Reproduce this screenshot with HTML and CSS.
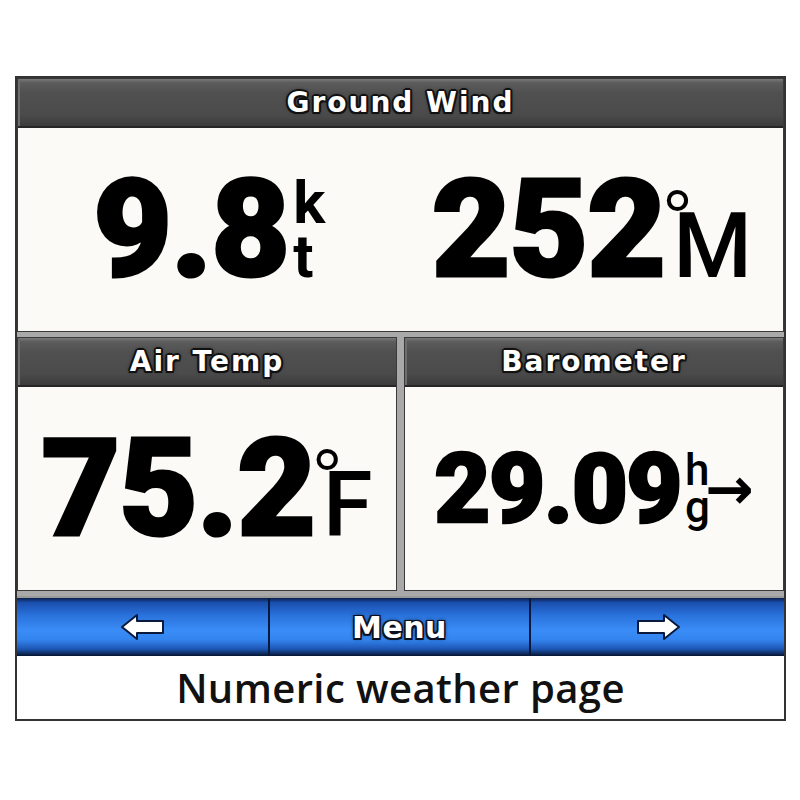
FILE: index.html
```html
<!DOCTYPE html>
<html lang="en">
<head>
<meta charset="utf-8">
<title>Numeric weather page</title>
<link rel="stylesheet" href="styles.css">
</head>
<body>
<div class="screen">
  <section class="panel">
    <div class="hdr"><span>Ground Wind</span></div>
    <div class="body split">
      <div class="val big">
        <span class="num">9.8</span>
        <span class="unit"><span class="u">k</span><span class="u">t</span></span>
      </div>
      <div class="val big">
        <span class="num">252</span>
        <span class="unit"><span class="deg">°</span><span class="u cap">M</span></span>
      </div>
    </div>
  </section>
  <div class="row">
    <section class="panel">
      <div class="hdr"><span>Air Temp</span></div>
      <div class="body">
        <div class="val big">
          <span class="num">75.2</span>
          <span class="unit"><span class="deg">°</span><span class="u cap">F</span></span>
        </div>
      </div>
    </section>
    <section class="panel">
      <div class="hdr"><span>Barometer</span></div>
      <div class="body">
        <div class="val mid">
          <span class="num">29.09</span>
          <span class="unit small"><span class="u">h</span><span class="u">g</span></span>
          <span class="trend">→</span>
        </div>
      </div>
    </section>
  </div>
  <nav class="bar">
    <div class="btn">
      <svg class="arrow" viewBox="0 0 46 28" aria-label="Back"><polygon points="2,14 17,2 17,8 43,8 43,20 17,20 17,26"/></svg>
    </div>
    <div class="btn"><span class="menu">Menu</span></div>
    <div class="btn">
      <svg class="arrow" viewBox="0 0 46 28" aria-label="Forward"><polygon points="44,14 29,2 29,8 3,8 3,20 29,20 29,26"/></svg>
    </div>
  </nav>
  <div class="caption">Numeric weather page</div>
</div>
</body>
</html>
```

FILE: styles.css
```css
html, body {
  margin: 0;
  padding: 0;
  background: #ffffff;
}

.screen {
  margin: 76px 0 0 15px;
  width: 767px;
  border: 2px solid #333333;
  border-bottom: none;
  background: #a9a9a9;
  display: flex;
  flex-direction: column;
  gap: 5px;
}

.panel {
  display: flex;
  flex-direction: column;
  background: #fcfaf6;
  border: 1px solid #3a3a3a;
}

.row {
  display: grid;
  grid-template-columns: 1fr 1fr;
  gap: 7px;
}

.hdr {
  height: 47px;
  display: flex;
  align-items: center;
  justify-content: center;
  background: linear-gradient(to bottom, #7a7a7a 0, #5c5c5c 8%, #505050 30%, #4b4b4b 75%, #3c3c3c 100%);
  border-bottom: 2px solid #262626;
  box-shadow: inset 2px 0 0 #6e6e6e;
}

.hdr span {
  font-family: "DejaVu Sans", sans-serif;
  font-weight: 700;
  font-size: 28px;
  letter-spacing: 2px;
  color: #ffffff;
  text-shadow: 1.5px 1.5px 0 #111, -1.5px -1.5px 0 #111, 1.5px -1.5px 0 #111, -1.5px 1.5px 0 #111, 0 2px 0 #111, 0 -2px 0 #111, 2px 0 0 #111, -2px 0 0 #111, 0 0 4px #000;
}

.body {
  height: 203px;
  display: flex;
  align-items: center;
  justify-content: center;
}

.split > .val {
  flex: 1;
  justify-content: center;
}

.val {
  display: flex;
  align-items: stretch;
  color: #000000;
}

.num {
  font-family: "Roboto", "Liberation Sans", sans-serif;
  font-weight: 900;
  -webkit-text-stroke: 3px #000000;
  letter-spacing: -1px;
}

.big .num {
  font-size: 136px;
  line-height: 98px;
}

.mid .num {
  font-size: 97px;
  line-height: 70px;
  -webkit-text-stroke: 2.5px #000000;
  letter-spacing: -1.5px;
}

.unit {
  display: flex;
  flex-direction: column;
  justify-content: space-between;
  align-items: flex-start;
  margin-left: 4px;
}

.u {
  font-family: "Roboto", "Liberation Sans", sans-serif;
  font-weight: 700;
  font-size: 60px;
  line-height: 44px;
}

.u.cap {
  font-size: 90px;
  line-height: 64px;
  font-weight: 500;
  margin-left: 4px;
}

.deg {
  font-family: "Liberation Sans", sans-serif;
  font-size: 76px;
  height: 32px;
  line-height: 72px;
  font-weight: 400;
  margin-left: -7px;
}

.small .u {
  font-size: 44px;
  line-height: 33px;
  font-weight: 500;
}

.trend {
  font-family: "DejaVu Sans", sans-serif;
  font-size: 58px;
  line-height: 70px;
  font-weight: 700;
  margin-left: -5px;
  align-self: center;
}

.bar {
  height: 58px;
  display: grid;
  grid-template-columns: 251px 261px 1fr;
  background: linear-gradient(to bottom, #0b1f4a 0, #1a4fae 8%, #2a72dc 30%, #3a8cf6 55%, #3384ee 72%, #1d56b4 88%, #06142f 100%);
  border-top: 2px solid #9a9a9a;
}

.btn {
  display: flex;
  align-items: center;
  justify-content: center;
  border-left: 2px solid #08183a;
}

.btn:first-child {
  border-left: none;
}

.arrow {
  width: 46px;
  height: 28px;
}

.arrow polygon {
  fill: #ffffff;
  stroke: #0a1a3c;
  stroke-width: 2;
  stroke-linejoin: round;
}

.menu {
  font-family: "DejaVu Sans", sans-serif;
  font-weight: 700;
  font-size: 30px;
  letter-spacing: 0.5px;
  color: #ffffff;
  text-shadow: 1.5px 1.5px 0 #0a0f20, -1.5px -1.5px 0 #0a0f20, 1.5px -1.5px 0 #0a0f20, -1.5px 1.5px 0 #0a0f20, 0 0 4px #000;
}

.caption {
  height: 63px;
  margin-top: -5px;
  background: #ffffff;
  border-bottom: 2px solid #333333;
  display: flex;
  align-items: center;
  justify-content: center;
  font-family: "Open Sans", sans-serif;
  font-weight: 600;
  font-size: 40px;
  letter-spacing: 0.4px;
  color: #111111;
}
```
